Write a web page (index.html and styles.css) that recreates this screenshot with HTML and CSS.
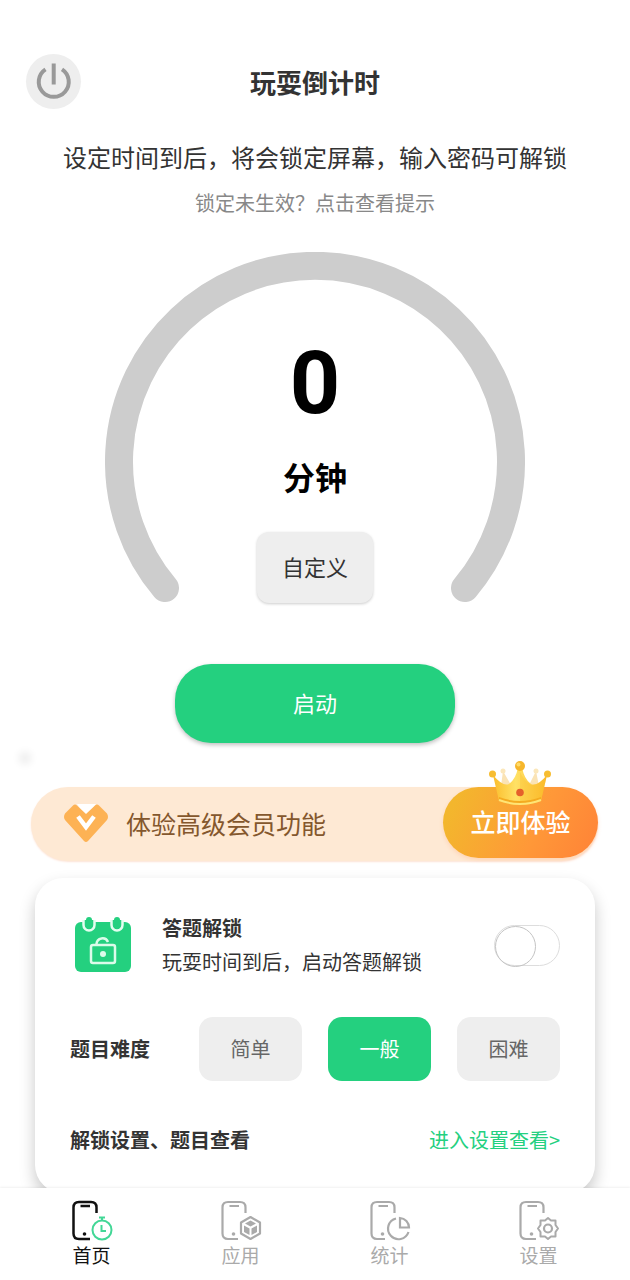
FILE: index.html
```html
<!DOCTYPE html>
<html lang="zh-CN">
<head>
<meta charset="utf-8">
<meta name="viewport" content="width=device-width, initial-scale=1">
<title>玩耍倒计时</title>
<link rel="stylesheet" href="styles.css">
</head>
<body>
<main class="screen">
  <header class="header">
    <button class="power" type="button" aria-label="关闭">
      <svg width="55" height="55" viewBox="0 0 55 55" fill="none" stroke="#999" stroke-width="4">
        <path d="M19.500 15.300A15 15 0 1 0 36 15.300"/>
        <path d="M27.700 9.500V30.500"/>
      </svg>
    </button>
    <h1 class="title">玩耍倒计时</h1>
  </header>
  <p class="lead">设定时间到后，将会锁定屏幕，输入密码可解锁</p>
  <a class="hint" href="#hint">锁定未生效？点击查看提示</a>

  <section class="gauge">
    <svg class="gauge-arc" viewBox="0 0 420 352" fill="none" stroke="#cdcdcd" stroke-width="28" stroke-linecap="round">
      <path d="M60 336A196 196 0 1 1 360 336"/>
    </svg>
    <div class="gauge-body">
      <span class="minutes">0</span>
      <span class="unit">分钟</span>
      <button class="custom" type="button">自定义</button>
    </div>
  </section>

  <div class="start-area">
    <button class="start" type="button">启动</button>
    <span class="speck"></span>
  </div>

  <section class="vip">
    <svg class="vip-icon" width="44" height="40" viewBox="0 0 44 40">
      <path d="M13 1H32L22 14Z" fill="#fff"/>
      <path d="M9 2.500Q11 .5 13 2.500L22 11L31 2.500Q33 .5 35 2.500L43 10.500Q45 14 43 17L24 38Q22 40 20 38L1 17Q-1 14 1 10.500Z" fill="#fdb254"/>
      <path d="M14 13.500L22 24L30 13.500" fill="none" stroke="#fff" stroke-width="4.500"/>
    </svg>
    <span class="vip-text">体验高级会员功能</span>
    <button class="vip-cta" type="button">立即体验
      <svg class="crown" width="62" height="46" viewBox="0 0 62 46">
        <defs>
          <linearGradient id="gold" x1="0" y1="0" x2="1" y2="0">
            <stop offset="0" stop-color="#fbbd2c"/><stop offset=".42" stop-color="#ffe165"/><stop offset="1" stop-color="#fdbb2c"/>
          </linearGradient>
        </defs>
        <path d="M12 25L14 10L22 24M50 25L47 10L40 24" fill="#fae3b5"/>
        <circle cx="14" cy="10" r="2.500" fill="#fbe7bb"/><circle cx="47" cy="10" r="2.500" fill="#fbe7bb"/>
        <path d="M4 14Q14 26 20 23Q27 18 29 6H33Q35 18 42 23Q48 26 58 14L52 40Q31 48 10 40Z" fill="url(#gold)"/>
        <path d="M31 11Q35 20 42 24Q50 25 58 14L52 40Q42 44 31 44Z" fill="#f9b824" opacity=".28"/>
        <path d="M10 36Q31 44 52 36V40Q31 48 10 40Z" fill="#f4ab20"/>
        <path d="M10 39Q31 47 52 39" fill="none" stroke="#ffe476" stroke-width="2"/>
        <circle cx="31" cy="5" r="5" fill="#f6b62b"/><circle cx="29.500" cy="3.500" r="2" fill="#ffdb68"/>
        <circle cx="3.500" cy="13" r="3.500" fill="#f7bd31"/><circle cx="58.500" cy="13" r="3.500" fill="#f7bd31"/>
        <circle cx="31" cy="31.500" r="3.800" fill="#e5602b"/>
      </svg>
    </button>
  </section>

  <section class="card">
    <div class="row">
      <svg class="quiz-icon" width="56" height="58" viewBox="0 0 56 58" fill="none">
        <rect x="0" y="6" width="56" height="50" rx="6" fill="#24d07f"/>
        <path d="M8.500 4V9A5.500 5.500 0 0 0 19.500 9V4M36.500 4V9A5.500 5.500 0 0 0 47.500 9V4" fill="#24d07f" stroke="#e4fdf0" stroke-width="2.500"/>
        <rect x="11" y="1" width="6" height="12" rx="3" fill="#24d07f"/>
        <rect x="39" y="1" width="6" height="12" rx="3" fill="#24d07f"/>
        <rect x="16" y="29" width="24" height="18" rx="2" stroke="#dcfbea" stroke-width="2.500"/>
        <path d="M21.500 29V28A6 6 0 0 1 33 26" stroke="#dcfbea" stroke-width="2.500"/>
        <circle cx="28" cy="38" r="3" fill="#dcfbea"/>
      </svg>
      <label class="quiz-label" for="quiz">
        <span class="strong">答题解锁</span>
        <span class="desc">玩耍时间到后，启动答题解锁</span>
      </label>
      <input class="toggle" id="quiz" type="checkbox" role="switch">
    </div>
    <div class="row levels">
      <span class="strong">题目难度</span>
      <div class="options">
        <button class="option" type="button">简单</button>
        <button class="option option-active" type="button" aria-pressed="true">一般</button>
        <button class="option" type="button">困难</button>
      </div>
    </div>
    <div class="row more">
      <span class="strong">解锁设置、题目查看</span>
      <a class="link" href="#settings">进入设置查看&gt;</a>
    </div>
  </section>
</main>

<nav class="tabs">
  <a class="tab tab-active" href="#home">
    <svg width="42" height="42" viewBox="0 0 42 42" fill="none" stroke="currentColor" stroke-width="2.500">
      <path d="M25.500 13V7.500Q25.500 2 20 2H8Q2.500 2 2.500 7.500V33.500Q2.500 39 8 39H19M9.500 6H19"/>
      <circle cx="13.500" cy="34" r="1.800" fill="currentColor" stroke="none"/>
      <g stroke="#42d796" stroke-width="2"><circle cx="31" cy="30" r="9.500"/><path d="M31 20.500V17M28 17.500H34M30.500 25V31H35"/></g>
    </svg>
    <span>首页</span>
  </a>
  <a class="tab" href="#apps">
    <svg width="42" height="42" viewBox="0 0 42 42" fill="none" stroke="currentColor" stroke-width="2.200">
      <path d="M25.500 13V7.500Q25.500 2 20 2H8Q2.500 2 2.500 7.500V33.500Q2.500 39 8 39H18M9.500 6H19"/>
      <circle cx="13.500" cy="34" r="1.800" fill="currentColor" stroke="none"/>
      <path d="M30.500 17L40 22.500V33.500L30.500 39L21 33.500V22.500Z" stroke-linejoin="round"/>
      <path d="M30.500 20.500L36 23.500L30.500 26.500L25 23.500ZM24 25.500L29.500 28.500V35L24 32ZM37 25.500L31.500 28.500V35L37 32Z" fill="currentColor" stroke="none"/>
    </svg>
    <span>应用</span>
  </a>
  <a class="tab" href="#stats">
    <svg width="42" height="42" viewBox="0 0 42 42" fill="none" stroke="currentColor" stroke-width="2.200">
      <path d="M25.500 13V7.500Q25.500 2 20 2H8Q2.500 2 2.500 7.500V33.500Q2.500 39 8 39H16M9.500 6H19"/>
      <circle cx="13.500" cy="34" r="1.800" fill="currentColor" stroke="none"/>
      <path d="M27 18.500A10.500 10.500 0 1 0 39.500 32"/>
      <path d="M31 18V27.500H40A9.500 9.500 0 0 0 31 18Z"/>
    </svg>
    <span>统计</span>
  </a>
  <a class="tab" href="#config">
    <svg width="42" height="42" viewBox="0 0 42 42" fill="none" stroke="currentColor" stroke-width="2.200">
      <path d="M25.500 13V7.500Q25.500 2 20 2H8Q2.500 2 2.500 7.500V33.500Q2.500 39 8 39H18M9.500 6H19"/>
      <circle cx="13.500" cy="34" r="1.800" fill="currentColor" stroke="none"/>
      <path d="M30 18L33 20.500H37.500V25L40 28.500L37.500 32V36.500H33L30 39L27 36.500H22.500V32L20 28.500L22.500 25V20.500H27Z" stroke-linejoin="round" stroke-width="2"/>
      <circle cx="30" cy="28.500" r="4"/>
    </svg>
    <span>设置</span>
  </a>
</nav>
</body>
</html>
```
FILE: styles.css
```css
* {
  box-sizing: border-box;
}

body {
  margin: 0;
  height: 100vh;
  display: flex;
  flex-direction: column;
  background: #fff;
  color: #333;
  font-family: "Noto Sans CJK SC", "Noto Sans", sans-serif;
}

button {
  border: 0;
  padding: 0;
  font: inherit;
  cursor: pointer;
}

a {
  text-decoration: none;
}

svg {
  display: block;
}

.screen {
  flex: 1;
  min-height: 0;
  overflow-y: auto;
  scrollbar-width: none;
  display: flex;
  flex-direction: column;
  padding-top: 54px;
}

.screen > * {
  flex-shrink: 0;
}

.header {
  display: grid;
  grid-template-columns: 1fr auto 1fr;
  align-items: center;
  padding: 0 26px;
}

.power {
  width: 55px;
  height: 55px;
  border-radius: 50%;
  background: #eee;
}

.title {
  margin: 0;
  font-size: 26px;
  line-height: 40px;
  font-weight: 700;
}

.lead {
  margin: 30px 0 0;
  font-size: 24px;
  line-height: 36px;
  text-align: center;
}

.hint {
  align-self: center;
  margin-top: 13px;
  font-size: 20px;
  line-height: 30px;
  color: #888;
}

.gauge {
  display: grid;
  justify-items: center;
  margin-top: 34px;
}

.gauge-arc,
.gauge-body {
  grid-area: 1 / 1;
}

.gauge-arc {
  width: 420px;
}

.gauge-body {
  display: flex;
  flex-direction: column;
  align-items: center;
  padding-top: 87px;
  color: #000;
}

.minutes {
  font-family: Roboto, sans-serif;
  font-size: 88px;
  line-height: 88px;
  font-weight: 700;
}

.unit {
  margin-top: 29px;
  font-size: 32px;
  line-height: 40px;
  font-weight: 700;
}

.custom {
  margin-top: 36px;
  padding-bottom: 3px;
  width: 116px;
  height: 71px;
  border-radius: 12px;
  background: #eee;
  box-shadow: 0 1px 3px rgba(0, 0, 0, 0.2);
  color: #333;
  font-size: 22px;
}

.start-area {
  position: relative;
  display: flex;
  justify-content: center;
  margin-top: 60px;
}

.start {
  padding-bottom: 3px;
  width: 280px;
  height: 79px;
  border-radius: 36px;
  background: #24d07f;
  box-shadow: 0 2px 4px rgba(0, 0, 0, 0.25);
  color: #fff;
  font-size: 22px;
}

.speck {
  position: absolute;
  left: 25px;
  bottom: -15px;
  box-shadow: 0 0 8px 5px rgba(0, 0, 0, 0.09);
}

.vip {
  display: flex;
  align-items: center;
  margin: 44px 32px 0 31px;
  padding: 0 0 3px 33px;
  height: 74px;
  border-radius: 37px;
  background: #fee9d4;
  box-shadow: 0 1px 2px #fde3d6;
}

.vip-text {
  margin-left: 18px;
  font-size: 25px;
  line-height: 36px;
  color: #84572d;
}

.vip-cta {
  position: relative;
  align-self: flex-start;
  margin-left: auto;
  padding-bottom: 3px;
  width: 155px;
  height: 71px;
  border-radius: 36px;
  background: linear-gradient(115deg, #f3b62d 10%, #ff9838 60%, #ff8237);
  box-shadow: 0 2px 4px rgba(255, 130, 55, 0.2);
  color: #fff;
  font-size: 25px;
  font-weight: 500;
}

.crown {
  position: absolute;
  left: 46px;
  top: -26px;
}

.card {
  margin: 17px 35px 0;
  padding: 33px 35px 36px;
  border-radius: 28px;
  background: #fff;
  box-shadow: 0 8px 16px rgba(0, 0, 0, 0.22);
}

.row {
  display: flex;
  align-items: center;
  justify-content: space-between;
  font-size: 20px;
  line-height: 34px;
}

.strong {
  font-weight: 700;
}

.quiz-icon {
  margin-left: 5px;
}

.quiz-label {
  display: flex;
  flex-direction: column;
  flex: 1;
  margin-left: 31px;
}

.toggle {
  appearance: none;
  display: flex;
  margin: 0;
  width: 66px;
  height: 41px;
  border: 1px solid #ddd;
  border-radius: 21px;
  background: #fff;
}

.toggle::before {
  content: "";
  width: 39px;
  height: 39px;
  border: 1px solid #c4c4c4;
  border-radius: 50%;
}

.toggle:checked {
  justify-content: flex-end;
  background: #24d07f;
}

.levels {
  margin-top: 38px;
}

.options {
  display: flex;
  gap: 26px;
}

.option {
  width: 103px;
  height: 64px;
  border-radius: 14px;
  background: #eee;
  color: #666;
  font-size: 20px;
}

.option-active {
  background: #24d07f;
  color: #fff;
}

.more {
  margin-top: 42px;
}

.link {
  color: #24d07f;
}

.tabs {
  position: relative;
  display: flex;
  padding: 12px 17px 12px;
  background: #fff;
  box-shadow: 0 -1px 2px rgba(0, 0, 0, 0.06);
}

.tab {
  flex: 1;
  display: flex;
  flex-direction: column;
  align-items: center;
  color: #aaa;
  font-size: 19px;
  line-height: 26px;
}

.tab-active {
  color: #111;
}
```
